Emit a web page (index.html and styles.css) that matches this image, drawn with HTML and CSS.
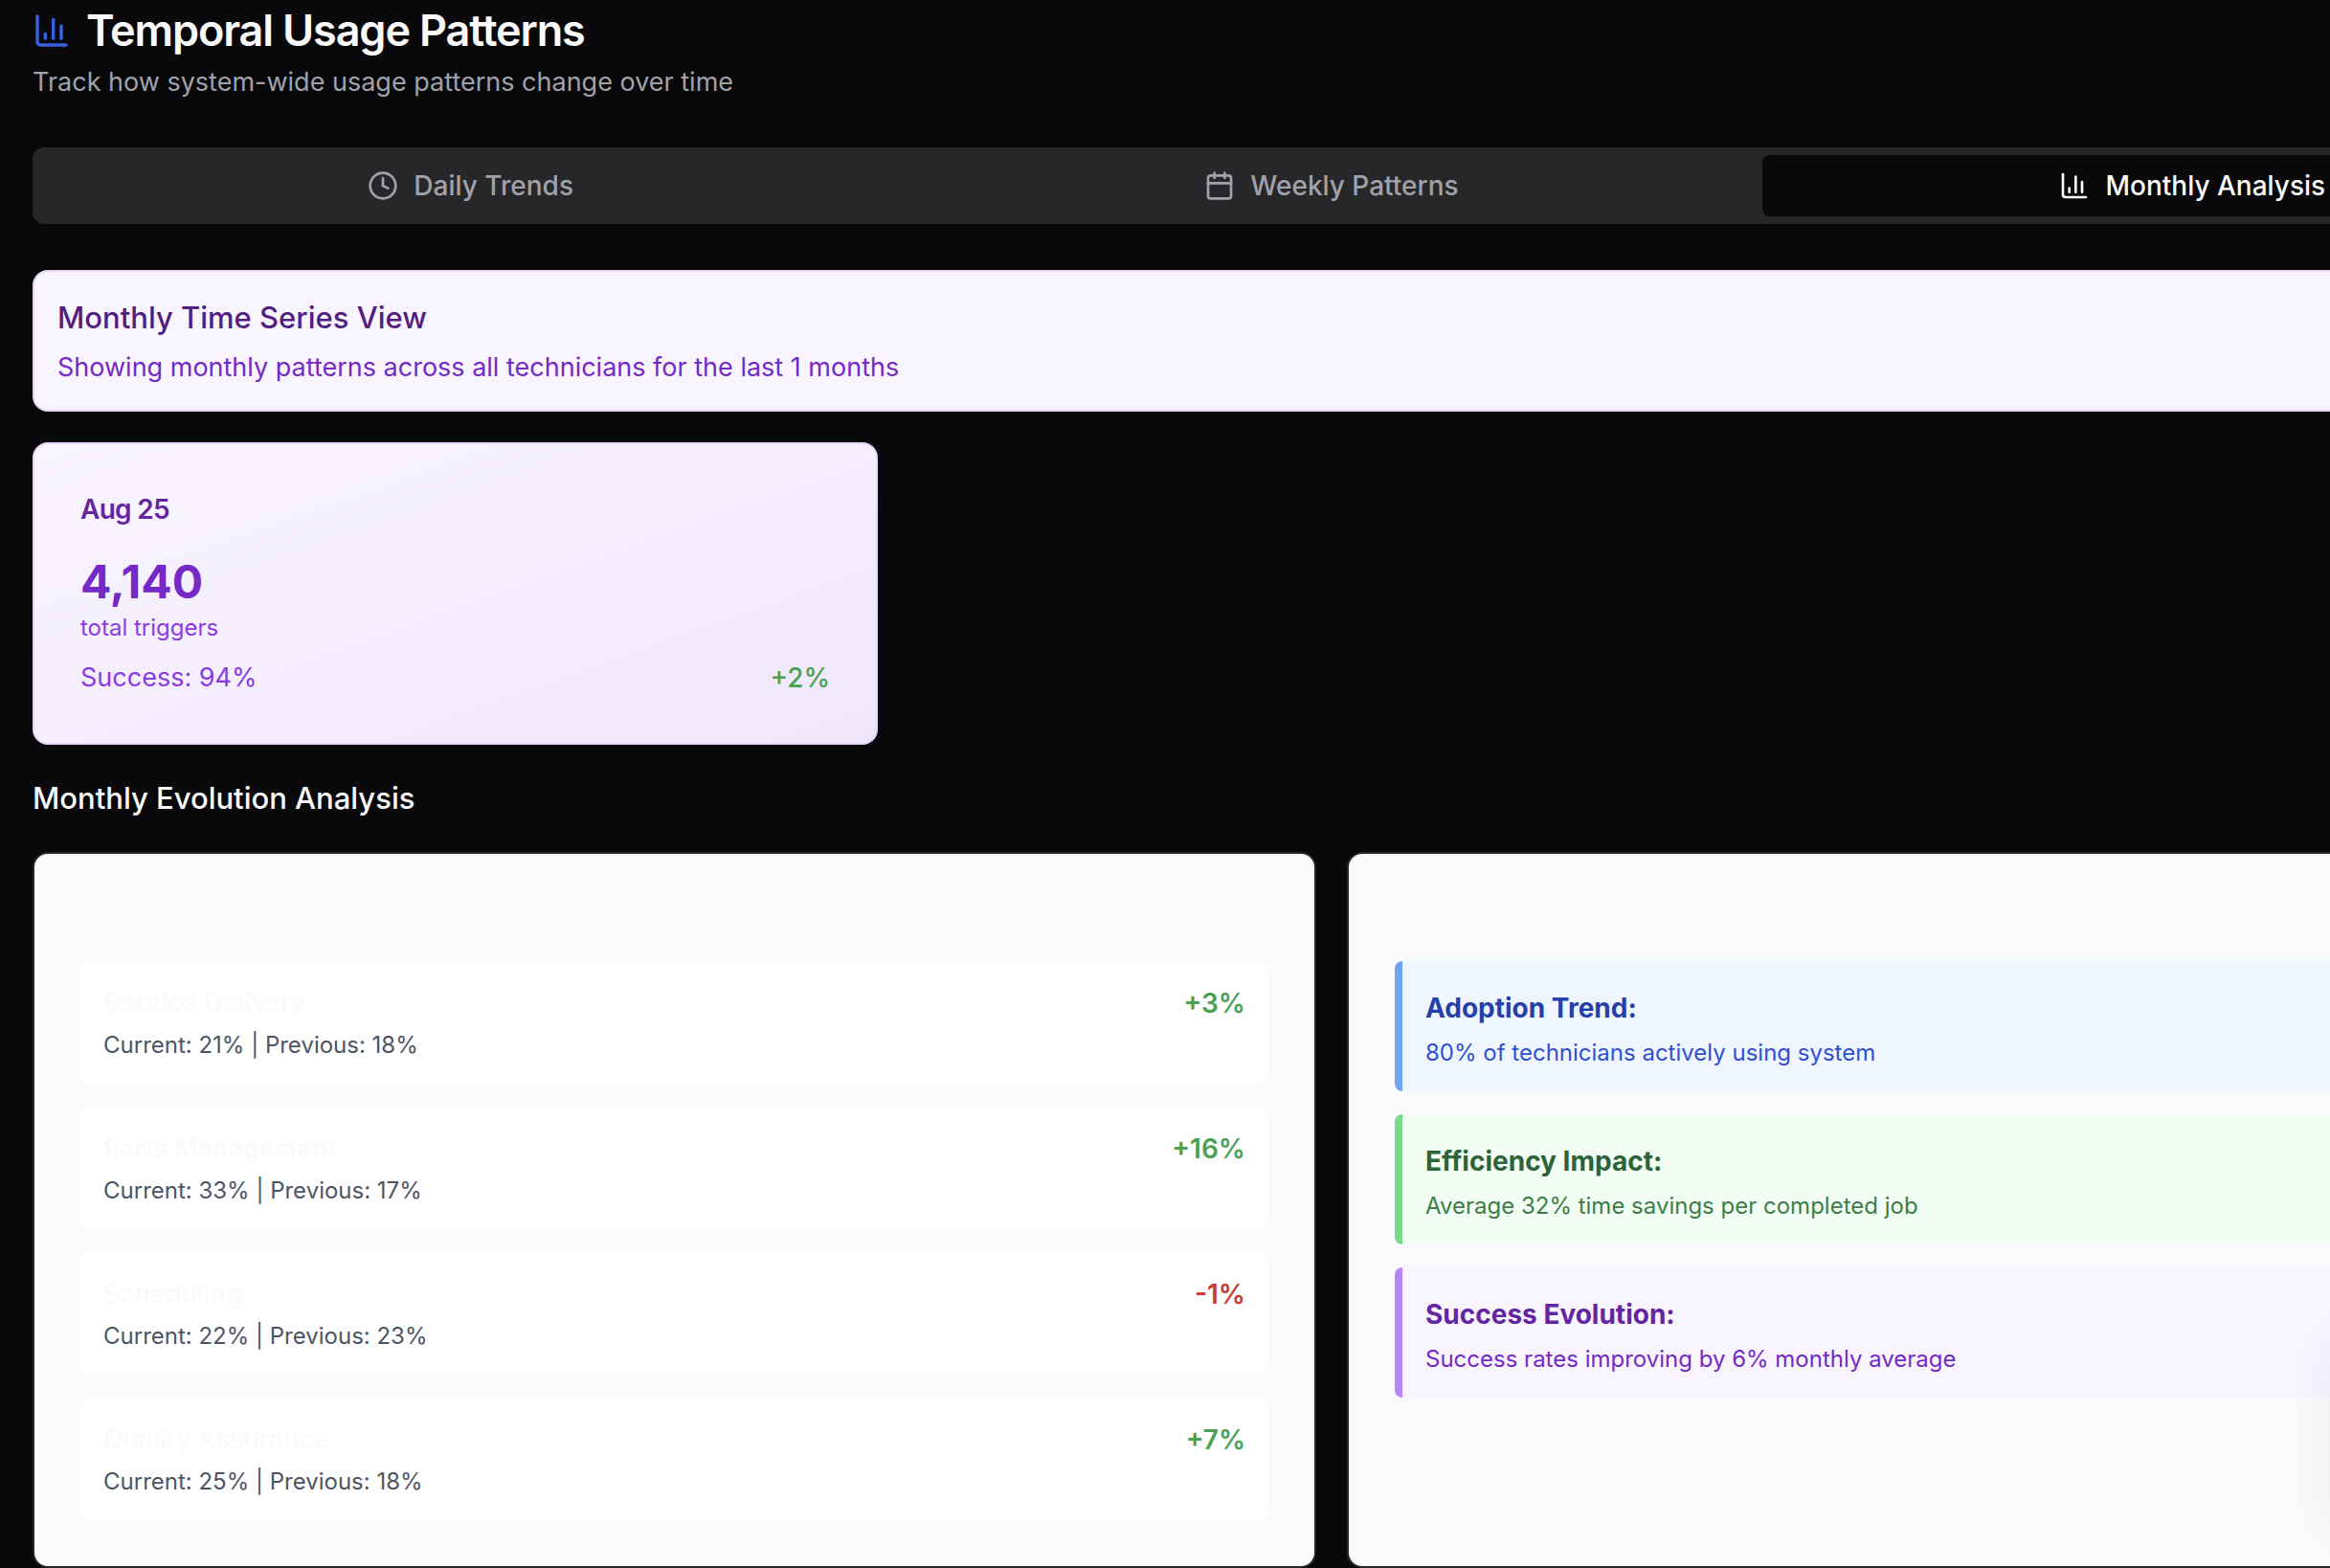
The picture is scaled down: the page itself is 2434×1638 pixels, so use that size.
FILE: index.html
```html
<!DOCTYPE html>
<html lang="en">
<head>
<meta charset="utf-8">
<title>Temporal Usage Patterns</title>
<link rel="stylesheet" href="styles.css">
</head>
<body>
<main class="page">
  <header class="header">
    <div class="header-row">
      <svg class="icon icon-title" viewBox="0 0 24 24" aria-hidden="true"><path d="M3 3v16a2 2 0 0 0 2 2h16"/><path d="M18 17V9"/><path d="M13 17V5"/><path d="M8 17v-3"/></svg>
      <h1 class="title">Temporal Usage Patterns</h1>
    </div>
    <p class="subtitle">Track how system-wide usage patterns change over time</p>
  </header>

  <div class="tabs" role="tablist">
    <button class="tab" type="button" role="tab" aria-selected="false">
      <svg class="icon" viewBox="0 0 24 24" aria-hidden="true"><circle cx="12" cy="12" r="10"/><path d="M12 6v6l4 2"/></svg>
      Daily Trends
    </button>
    <button class="tab" type="button" role="tab" aria-selected="false">
      <svg class="icon" viewBox="0 0 24 24" aria-hidden="true"><path d="M8 2v4"/><path d="M16 2v4"/><rect width="18" height="18" x="3" y="4" rx="2"/><path d="M3 10h18"/></svg>
      Weekly Patterns
    </button>
    <button class="tab tab-active" type="button" role="tab" aria-selected="true">
      <svg class="icon" viewBox="0 0 24 24" aria-hidden="true"><path d="M3 3v16a2 2 0 0 0 2 2h16"/><path d="M18 17V9"/><path d="M13 17V5"/><path d="M8 17v-3"/></svg>
      Monthly Analysis
    </button>
  </div>

  <section class="banner">
    <h2 class="banner-title">Monthly Time Series View</h2>
    <p class="banner-text">Showing monthly patterns across all technicians for the last 1 months</p>
  </section>

  <div class="months">
    <article class="month">
      <h3 class="month-name">Aug 25</h3>
      <div class="month-total">4,140</div>
      <div class="month-label">total triggers</div>
      <div class="month-foot">
        <span>Success: 94%</span>
        <span class="month-change">+2%</span>
      </div>
    </article>
  </div>

  <h2 class="section-title">Monthly Evolution Analysis</h2>

  <div class="panels">
    <section class="panel">
      <h3 class="panel-title">Usage Category Evolution</h3>
      <ul class="list">
        <li class="row">
          <div><div class="row-name">Service Delivery</div><div class="row-text">Current: 21% | Previous: 18%</div></div>
          <span class="change up">+3%</span>
        </li>
        <li class="row">
          <div><div class="row-name">Parts Management</div><div class="row-text">Current: 33% | Previous: 17%</div></div>
          <span class="change up">+16%</span>
        </li>
        <li class="row">
          <div><div class="row-name">Scheduling</div><div class="row-text">Current: 22% | Previous: 23%</div></div>
          <span class="change down">-1%</span>
        </li>
        <li class="row">
          <div><div class="row-name">Quality Assurance</div><div class="row-text">Current: 25% | Previous: 18%</div></div>
          <span class="change up">+7%</span>
        </li>
      </ul>
    </section>
    <section class="panel">
      <h3 class="panel-title">Key Monthly Insights</h3>
      <ul class="list">
        <li class="note note-blue"><div class="note-head"><strong>Adoption Trend:</strong></div><p class="note-text">80% of technicians actively using system</p></li>
        <li class="note note-green"><div class="note-head"><strong>Efficiency Impact:</strong></div><p class="note-text">Average 32% time savings per completed job</p></li>
        <li class="note note-purple"><div class="note-head"><strong>Success Evolution:</strong></div><p class="note-text">Success rates improving by 6% monthly average</p></li>
      </ul>
    </section>
  </div>
</main>
<div class="side-shadow" aria-hidden="true"></div>
</body>
</html>
```
FILE: styles.css
```css
* { box-sizing: border-box; margin: 0; padding: 0; }

body {
  overflow-x: hidden;
  background: #09090b;
  color: #fafafa;
  font-family: Inter, "Liberation Sans", sans-serif;
  font-size: 27px;
  line-height: 40px;
}

/* The content column runs on past the right edge of the window. */
.page {
  display: flex;
  flex-direction: column;
  gap: 32px;
  width: calc(100% + 314px);
  padding-left: 34px;
}

.header { margin-bottom: 16px; }
.header-row { display: flex; align-items: center; gap: 16px; padding-bottom: 2px; }
.title { font-size: 45px; line-height: 64px; font-weight: 600; letter-spacing: -0.025em; }
.subtitle { color: #a1a1aa; }

.icon {
  flex: none;
  width: 32px;
  height: 32px;
  fill: none;
  stroke: currentColor;
  stroke-width: 2;
  stroke-linecap: round;
  stroke-linejoin: round;
}
.icon-title { width: 40px; height: 40px; color: #3662e3; }

.tabs {
  display: grid;
  grid-template-columns: repeat(3, 1fr);
  padding: 8px;
  margin-bottom: 16px;
  border-radius: 12px;
  background: #27272a;
}
.tab {
  display: flex;
  align-items: center;
  justify-content: center;
  gap: 16px;
  padding: 12px 24px;
  border: 0;
  border-radius: 8px;
  background: transparent;
  color: #a1a1aa;
  font: inherit;
  font-size: 28px;
  font-weight: 500;
  cursor: pointer;
}
.tab-active {
  background: #09090b;
  color: #fafafa;
  box-shadow: 0 2px 4px rgba(0, 0, 0, 0.1);
}

.banner {
  padding: 24px;
  border: 2px solid #e7d6fb;
  border-radius: 16px;
  background: #f8f5ff;
}
.banner-title { margin-bottom: 8px; color: #521e81; font-size: 31px; line-height: 48px; font-weight: 500; }
.banner-text { color: #7529c6; }

.months { display: grid; grid-template-columns: repeat(3, 1fr); gap: 32px; }
.month {
  padding: 48px;
  border: 2px solid #e7d6fb;
  border-radius: 16px;
  background: linear-gradient(to bottom right, #f9f5ff, #efe7fc);
}
.month-name { margin-bottom: 24px; color: #6425a2; font-size: 28px; font-weight: 600; letter-spacing: -0.025em; }
.month-total { color: #7529c6; font-size: 48px; line-height: 64px; font-weight: 700; }
.month-label { color: #8b3be2; font-size: 24px; line-height: 32px; }
.month-foot { display: flex; justify-content: space-between; margin-top: 16px; color: #8b3be2; }
.month-change { color: #4ba153; font-size: 28px; font-weight: 500; }

.section-title { font-size: 31px; line-height: 48px; font-weight: 500; }

.panels { display: grid; grid-template-columns: repeat(2, 1fr); gap: 32px; }
.panel {
  padding: 48px;
  border: 2px solid #27272a;
  border-radius: 16px;
  background: #f9fafc;
}
.panel-title { margin-bottom: 24px; color: #fafafa; font-size: 28px; font-weight: 600; letter-spacing: -0.025em; }
.list { display: grid; gap: 24px; list-style: none; }

.row {
  display: flex;
  justify-content: space-between;
  padding: 24px;
  border-radius: 8px;
  background: #fff;
}
.row-name { margin-bottom: 8px; color: #fafafa; font-weight: 500; }
.row-text { color: #4d5563; font-size: 24px; line-height: 32px; }
.change { font-size: 28px; font-weight: 600; }
.up { color: #4ba153; }
.down { color: #cb3a31; }

.note { padding: 24px; border-left: 8px solid; border-radius: 8px; }
.note-head { margin-bottom: 8px; font-size: 32px; line-height: 48px; }
.note-head strong { font-size: 28px; line-height: 40px; font-weight: 700; }
.note-text { font-size: 24px; line-height: 32px; }
.note-blue { border-color: #71a3f6; background: #eff6ff; }
.note-blue .note-head { color: #263fa9; }
.note-blue .note-text { color: #2f50d3; }
.note-green { border-color: #78da8a; background: #f2fdf4; }
.note-green .note-head { color: #2d6338; }
.note-green .note-text { color: #3d7e47; }
.note-purple { border-color: #b785f6; background: #f8f5ff; }
.note-purple .note-head { color: #6425a2; }
.note-purple .note-text { color: #7529c6; }

.side-shadow {
  position: fixed;
  left: 100%;
  bottom: 40px;
  width: 80px;
  height: 200px;
  border-radius: 16px;
  box-shadow: 0 0 50px rgba(0, 0, 0, 0.06);
  pointer-events: none;
}
```
